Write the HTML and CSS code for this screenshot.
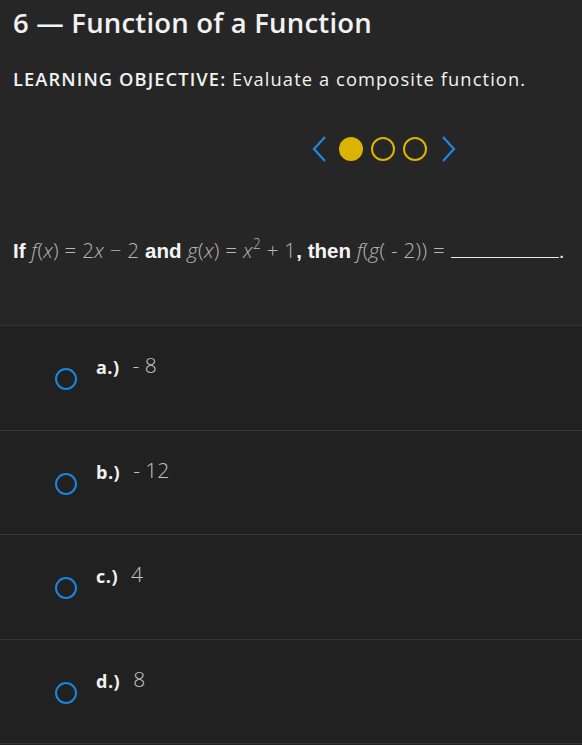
FILE: index.html
```html
<!DOCTYPE html>
<html>
<head>
<meta charset="utf-8">
<link rel="stylesheet" href="styles.css">
</head>
<body>
<div class="top">
  <h1 class="title">6 — Function of a Function</h1>
  <p class="objective"><b>LEARNING OBJECTIVE:</b> Evaluate a composite function.</p>
  <div class="nav">
    <svg class="chev" width="16" height="28" viewBox="0 0 16 28"><path d="M14 2 L3 14 L14 26" fill="none" stroke="#1e88e5" stroke-width="2.2"/></svg>
    <span class="dot filled"></span>
    <span class="dot"></span>
    <span class="dot"></span>
    <svg class="chev" width="16" height="28" viewBox="0 0 16 28"><path d="M2 2 L13 14 L2 26" fill="none" stroke="#1e88e5" stroke-width="2.2"/></svg>
  </div>
  <p class="question"><b>If</b> <span class="m"><i>f</i>(<i>x</i>) = 2<i>x</i> − 2</span> <b>and</b> <span class="m"><i>g</i>(<i>x</i>) = <i>x</i><sup>2</sup> + 1</span><b>, then</b> <span class="m"><i>f</i>(<i>g</i>( - 2)) =</span> <span class="blank"></span>.</p>
</div>
<div class="options">
  <div class="opt"><span class="radio"></span><span class="lbl">a.)</span><span class="val">- 8</span></div>
  <div class="opt"><span class="radio"></span><span class="lbl">b.)</span><span class="val">- 12</span></div>
  <div class="opt"><span class="radio"></span><span class="lbl">c.)</span><span class="val">4</span></div>
  <div class="opt"><span class="radio"></span><span class="lbl">d.)</span><span class="val">8</span></div>
</div>
</body>
</html>
```
FILE: styles.css
```css
html, body {
  margin: 0;
  padding: 0;
  background: #212121;
}
body {
  font-family: "Open Sans", "Liberation Sans", sans-serif;
  color: #f2f2f2;
  height: 745px;
  overflow: hidden;
}
.top {
  background: #262626;
  padding: 5px 13px 0;
  height: 320px;
  border-bottom: 1px solid #363636;
}
.title {
  margin: 0;
  font-size: 27.5px;
  font-weight: 600;
  line-height: 36px;
  letter-spacing: 0.2px;
}
.objective {
  margin: 27px 0 0;
  font-size: 18.3px;
  line-height: 22px;
  font-weight: 500;
  letter-spacing: 1.1px;
}
.objective b { font-weight: 600; }
.nav {
  display: flex;
  align-items: center;
  justify-content: flex-end;
  gap: 8px;
  margin: 45px 0 0;
  padding-right: 112px;
  height: 28px;
}
.chev { display: block; }
.nav .chev:first-child { margin-right: 4px; }
.nav .chev:last-child { margin-left: 6px; }
.dot {
  width: 20px;
  height: 20px;
  border: 2px solid #d9b400;
  border-radius: 50%;
}
.dot.filled { background: #d9b400; }
.question {
  margin: 75px 0 0;
  font-family: "Liberation Sans", Arial, sans-serif;
  font-size: 20.5px;
  line-height: 24px;
  white-space: nowrap;
}
.question b { font-weight: 700; color: #f5f5f5; }
.m {
  color: #b8b8b8;
  font-family: "Open Sans", "Liberation Sans", sans-serif;
  font-weight: 300;
  font-size: 20.5px;
  letter-spacing: 0.3px;
}
.m i { font-style: italic; }
.m sup { font-size: 14px; line-height: 0; vertical-align: 9px; }
.blank {
  display: inline-block;
  width: 108px;
  border-bottom: 1px solid #e8e8e8;
  vertical-align: baseline;
}
.opt {
  border-bottom: 1px solid #363636;
  display: flex;
  align-items: flex-start;
  box-sizing: border-box;
  height: 105px;
  padding-left: 55px;
}
.opt:nth-child(even) { height: 104px; }
.radio {
  width: 18px;
  height: 18px;
  border: 2px solid #1a86e0;
  border-radius: 50%;
  margin-top: 42px;
  flex: none;
}
.lbl {
  margin-left: 19px;
  margin-top: 30px;
  font-size: 18px;
  font-weight: 700;
  line-height: 22px;
  letter-spacing: 0.5px;
}
.val {
  margin-left: 13px;
  margin-top: 27px;
  font-family: "Open Sans", sans-serif;
  font-weight: 300;
  font-size: 21px;
  line-height: 24px;
  color: #c4c4c4;
}
```
